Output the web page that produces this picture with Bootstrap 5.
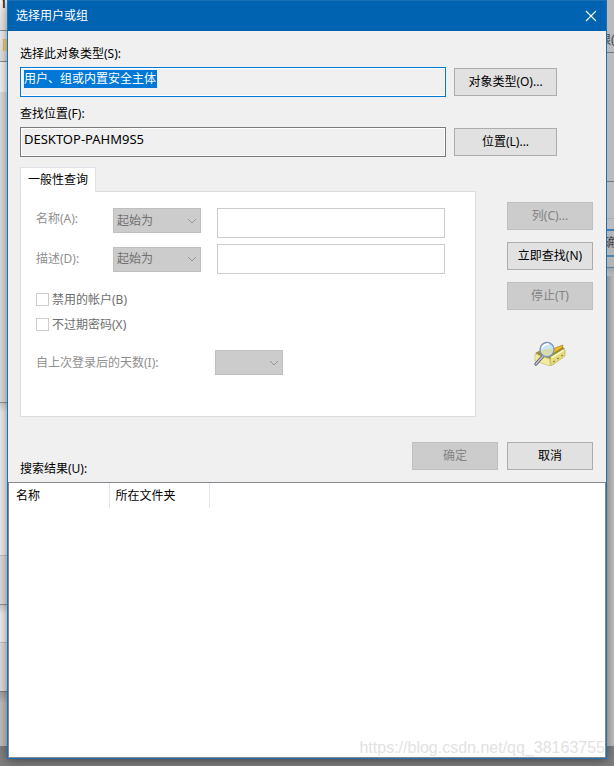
<!DOCTYPE html>
<html lang="zh-CN">
<head>
<meta charset="utf-8">
<meta name="viewport" content="width=device-width, initial-scale=1">
<title>选择用户或组</title>
<link href="https://cdn.jsdelivr.net/npm/bootstrap@5.3.0/dist/css/bootstrap.min.css" rel="stylesheet">
<style>
  body { font: 12px/18px "Noto Sans", "Noto Sans CJK SC", sans-serif; color: #000; background: #808080; }
  .desktop { background: linear-gradient(#c0bfbe, #c0bfbe) top / 100% calc(100% - 20px) no-repeat; }
  .strip { width: 7px; flex: none; }
  /* edges of the windows that lie behind the dialog */
  .strip-left { background: linear-gradient(#f5f5f5, #e4e4e4 30px, #8f8f8f 30px 31px, #f0f0f0 31px, #e0e0e0 61px, #8f8f8f 61px 62px, #f3f3f3 62px 92px, #dedede 92px 402px, #929292 402px 403px, #d0d0d0 403px, #eee 412px 555px, #c4c4c4 555px 556px, #dedede 556px 604px, #929292 604px 605px, #d0d0d0 605px, #f0f0f0 614px 642px, #c4c4c4 642px 643px, #dedede 643px 691px, #808080 691px 692px, #a0a0a0 692px, #bcbcbc 702px, transparent 702px); }
  .strip-right { background: linear-gradient(#bbb 52px, #777 52px 53px, #bbb 53px 181px, #777 181px 182px, #bdbdbd 182px 218px, #aaa 218px 219px, #bdbdbd 219px 229px, #3c7fb6 229px 231px, #b5b5b5 231px 255px, #4b86b5 255px 257px, #b5b5b5 257px 267px, #4b7da5 267px 268px, #a5a5a5 268px, #bbb 276px, transparent 276px); }
  .peek { position: absolute; left: 0; white-space: nowrap; color: #444; }
  .peek-title { top: -11px; left: -5px; font-size: 18px; line-height: 24px; color: #222; }
  .peek-folder { top: 39px; left: 3px; width: 4px; height: 12px; background: #f0d583; border-left: 1px solid #e0bd5d; }
  .peek-perm { top: 31px; left: -8px; }
  .peek-ok { top: 234px; left: -3px; }
  .dialog-box { background: #f0f0f0; border: 1px solid #1a6fb5; margin-bottom: 7px; box-shadow: 0 2px 10px rgba(0,0,0,.45); min-width: 0; }
  .title-bar { background: #0063b1; color: #fff; height: 30px; padding: 0 9px 0 8px; }
  .title-bar h1 { font-size: 12px; line-height: 18px; font-weight: 400; }
  .close-x { width: 12px; height: 12px; line-height: 0; }
  .dialog-body { padding: 14px 13px 4px 12px; }
  .location-row { padding-right: 36px; }
  .field-box { height: 30px; border: 1px solid #7a7a7a; padding: 2px 3px; box-shadow: inset 0 0 0 1px #fff; min-width: 0; line-height: 0; }
  .field-box.active { border-color: #0078d7; }
  .field-box input { border: 0; outline: 0; padding: 0; height: 18px; background: transparent; color: #000; width: 100%; font-size: 13px; line-height: 18px; }
  .field-box.active input { width: 133px; font-size: 12px; background: #0078d7; color: #fff; }
  .win-btn { --bs-btn-padding-x: 0px; --bs-btn-padding-y: 0px; --bs-btn-font-size: 12px; --bs-btn-line-height: 18px; --bs-btn-border-radius: 0; --bs-btn-color: #000; --bs-btn-bg: #e1e1e1; --bs-btn-border-color: #adadad; --bs-btn-hover-color: #000; --bs-btn-hover-bg: #e5f1fb; --bs-btn-hover-border-color: #0078d7; --bs-btn-disabled-color: #838383; --bs-btn-disabled-bg: #ccc; --bs-btn-disabled-border-color: #bfbfbf; --bs-btn-disabled-opacity: 1; width: 86px; height: 28px; flex: none; }
  .win-btn.wide { width: 103px; }
  .gap-side { gap: 31px; }
  .query-tabs { --bs-nav-tabs-border-width: 0px; padding-top: 2px; }
  .query-tabs .nav-link { border: 1px solid #d9d9d9; border-bottom: 0; border-radius: 0; background: #fff; color: #000; padding: 3px 7px; height: 25px; width: 76px; line-height: 18px; margin: 0 0 -1px; position: relative; z-index: 1; }
  .query-panel { background: #fff; border: 1px solid #dcdcdc; padding: 16px 30px 41px 15px; color: #8f8f8f; min-width: 0; }
  .query-line { margin-bottom: 6px; }
  .query-group { padding-top: 13px; }
  .query-label { width: 77px; flex: none; line-height: 22px; }
  .query-days { width: 179px; flex: none; }
  .win-select { width: 88px; height: 25px; flex: none; font-size: 12px; line-height: 18px; padding: 2px 18px 2px 3px; border-radius: 0; border-color: #bfbfbf; }
  .win-select:disabled { color: #707070; background-color: #ccc; opacity: 1; background-image: url("data:image/svg+xml,%3Csvg xmlns='http://www.w3.org/2000/svg' viewBox='0 0 10 6'%3E%3Cpath d='M1 1l4 4 4-4' fill='none' stroke='%23969696'/%3E%3C/svg%3E"); background-size: 10px 6px; background-position: right 3px center; }
  .win-select.short { width: 68px; }
  .win-input { height: 30px; border-radius: 0; border-color: #ccc; padding: 2px 4px; font-size: 12px; }
  .win-input:disabled { background: #fff; }
  .check-row { height: 25px; gap: 3px; color: #6d6d6d; }
  .check-row .form-check-input { width: 13px; height: 13px; border-radius: 0; border-color: #ccc; opacity: 1; }
  .check-row .form-check-input:disabled ~ label { opacity: 1; }
  .side-buttons { padding-top: 11px; gap: 12px; }
  .search-art { width: 34px; height: 28px; margin-top: 19px; }
  .actions { padding-top: 25px; }
  .action-buttons { gap: 9px; }
  .results { background: #fff; border: 1px solid #828790; }
  .results th { font-weight: 400; width: 100px; height: 25px; padding: 3px 7px; border-right: 1px solid #e5e5e5; line-height: 18px; }
  .results th + th { padding-left: 6px; }
  .watermark { position: absolute; right: 9px; bottom: 8px; font: 16px/20px "Liberation Sans", sans-serif; color: #e2e2e2; }
</style>
<script src="https://cdn.jsdelivr.net/npm/bootstrap@5.3.0/dist/js/bootstrap.bundle.min.js"></script>
</head>
<body>
<div class="desktop d-flex min-vh-100 position-relative overflow-hidden">
  <div class="strip strip-left position-relative overflow-hidden" aria-hidden="true">
    <span class="peek peek-title">n</span><span class="peek peek-folder"></span>
  </div>
  <main class="dialog-box d-flex flex-column flex-grow-1 position-relative">
    <header class="title-bar d-flex align-items-center justify-content-between">
      <h1 class="m-0">选择用户或组</h1>
      <button type="button" class="close-x border-0 bg-transparent p-0" aria-label="关闭">
        <svg width="12" height="12" viewBox="0 0 12 12" fill="none" stroke="#fff" stroke-width="1.1"><path d="M1 1l10 10M11 1L1 11"/></svg>
      </button>
    </header>
    <form class="dialog-body">
      <label class="d-block mb-1" for="objType">选择此对象类型(S):</label>
      <div class="location-row d-flex align-items-center gap-2 mb-2">
        <div class="field-box active flex-grow-1"><input id="objType" type="text" value="用户、组或内置安全主体" readonly></div>
        <button type="button" class="btn win-btn wide">对象类型(O)...</button>
      </div>
      <label class="d-block mb-1" for="location">查找位置(F):</label>
      <div class="location-row d-flex align-items-center gap-2 mb-2">
        <div class="field-box flex-grow-1"><input id="location" type="text" value="DESKTOP-PAHM9S5" readonly></div>
        <button type="button" class="btn win-btn wide">位置(L)...</button>
      </div>
      <div class="nav nav-tabs query-tabs" role="tablist">
        <button type="button" class="nav-link active" role="tab" aria-selected="true">一般性查询</button>
      </div>
      <div class="d-flex gap-side">
        <section class="query-panel flex-grow-1">
          <div class="query-line d-flex align-items-start">
            <label class="query-label" for="nameText">名称(A):</label>
            <select class="form-select win-select me-3" aria-label="名称条件" disabled><option>起始为</option></select>
            <input id="nameText" class="form-control win-input" type="text" disabled>
          </div>
          <div class="d-flex align-items-center">
            <label class="query-label" for="descText">描述(D):</label>
            <select class="form-select win-select me-3" aria-label="描述条件" disabled><option>起始为</option></select>
            <input id="descText" class="form-control win-input" type="text" disabled>
          </div>
          <div class="query-group">
            <div class="check-row d-flex align-items-center"><input class="form-check-input m-0" id="disabledAcc" type="checkbox" disabled><label for="disabledAcc">禁用的帐户(B)</label></div>
            <div class="check-row d-flex align-items-center"><input class="form-check-input m-0" id="noExpire" type="checkbox" disabled><label for="noExpire">不过期密码(X)</label></div>
          </div>
          <div class="query-group d-flex align-items-center">
            <label class="query-days" for="days">自上次登录后的天数(I):</label>
            <select id="days" class="form-select win-select short" disabled><option></option></select>
          </div>
        </section>
        <div class="side-buttons d-flex flex-column align-items-center">
          <button type="button" class="btn win-btn" disabled>列(C)...</button>
          <button type="button" class="btn win-btn">立即查找(N)</button>
          <button type="button" class="btn win-btn" disabled>停止(T)</button>
          <svg class="search-art" viewBox="0 0 34 28" aria-hidden="true">
            <path d="M2 12l6-3 9-1 13-2 2 2-15 12z" fill="#a08f3a"/>
            <path d="M17 9l13-5-1 3-10 6z" fill="#f0bf20" stroke="#a97c16" stroke-width=".7"/>
            <path d="M2 13l15 5v7L2 20z" fill="#f1ea9f" stroke="#c4b966" stroke-width=".6"/>
            <path d="M17 18L32 9v6L18 25z" fill="#e6dc7c" stroke="#b5a748" stroke-width=".6"/>
            <path d="M18 17L31 9" stroke="#fdf9c0" stroke-width="2"/>
            <path d="M20 21l2-1m2-2l2-1m2-2l2-1" stroke="#7c7343"/>
            <path d="M10 15L3 23" stroke="#60606c" stroke-width="3.4" stroke-linecap="round"/>
            <path d="M10 15L3 23" stroke="#c3c3cd" stroke-width="1.6" stroke-linecap="round"/>
            <circle cx="14" cy="8.500" r="7" fill="#cbe5f8" stroke="#8098b5" stroke-width="1.4"/>
            <path d="M8 10q5-3 12-2-1 6-6 6.500-4 0-6-4.500z" fill="#d8dcab"/>
            <path d="M9 7q2-4 7-4" fill="none" stroke="#fff" stroke-width="1.500"/>
          </svg>
        </div>
      </div>
      <div class="actions d-flex align-items-end">
        <label class="flex-grow-1" id="resultsLabel">搜索结果(U):</label>
        <div class="action-buttons d-flex pb-2">
          <button type="button" class="btn win-btn" disabled>确定</button>
          <button type="button" class="btn win-btn">取消</button>
        </div>
      </div>
    </form>
    <section class="results flex-grow-1">
      <table aria-labelledby="resultsLabel"><thead><tr><th scope="col">名称</th><th scope="col">所在文件夹</th></tr></thead></table>
    </section>
  </main>
  <div class="strip strip-right position-relative overflow-hidden" aria-hidden="true">
    <span class="peek peek-perm">限(R)</span><span class="peek peek-ok">确定</span>
  </div>
  <span class="watermark">https://blog.csdn.net/qq_38163755</span>
</div>
</body>
</html>
